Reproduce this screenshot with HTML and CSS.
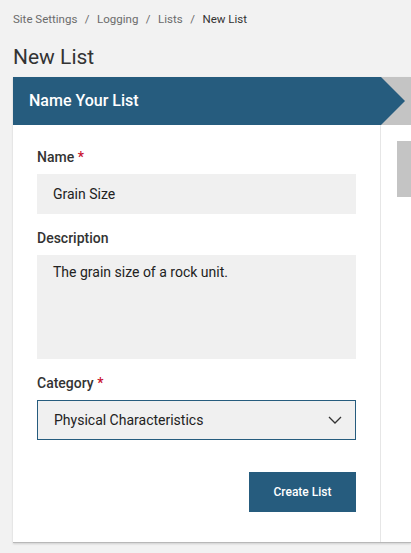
FILE: index.html
```html
<!DOCTYPE html>
<html>
<head>
<meta charset="utf-8">
<link rel="stylesheet" href="styles.css">
</head>
<body>
<nav class="crumbs">
  <span>Site Settings</span><span class="sep">/</span><span>Logging</span><span class="sep">/</span><span>Lists</span><span class="sep">/</span><span class="current">New List</span>
</nav>
<h1 class="title">New List</h1>
<div class="card">
  <div class="steps">
    <div class="step-active">Name Your List</div>
  </div>
  <div class="card-body">
    <div class="main">
      <div class="field">
        <label class="label">Name <span class="req">*</span></label>
        <div class="input">Grain Size</div>
      </div>
      <div class="field">
        <label class="label">Description</label>
        <div class="input textarea">The grain size of a rock unit.</div>
      </div>
      <div class="field">
        <label class="label">Category <span class="req">*</span></label>
        <div class="input select">
          <span>Physical Characteristics</span>
          <svg class="chev" width="14" height="8" viewBox="0 0 14 8"><path d="M1 1l6 6 6-6" fill="none" stroke="#333" stroke-width="1.3"/></svg>
        </div>
      </div>
      <div class="actions">
        <button class="btn">Create List</button>
      </div>
    </div>
    <div class="side">
      <div class="thumb"></div>
    </div>
  </div>
</div>
</body>
</html>
```
FILE: styles.css
```css
html, body { margin: 0; padding: 0; }
body {
  background: #f2f2f2;
  font-family: Roboto, "Liberation Sans", sans-serif;
  color: #333;
  width: 411px;
  height: 553px;
  overflow: hidden;
  padding-left: 13px;
  box-sizing: border-box;
}
.crumbs {
  font-size: 11.5px;
  color: #6b6b6b;
  padding-top: 12px;
  height: 14px;
  line-height: 14px;
}
.crumbs .sep { margin: 0 7.5px; }
.crumbs .current { color: #333; }
.title {
  margin: 0;
  font-size: 21px;
  font-weight: 400;
  color: #333;
  line-height: 24px;
  margin-top: 19px;
  height: 26px;
}
.card {
  margin-top: 6px;
  background: #fff;
  height: 465px;
  border-bottom: 1px solid #b8b8b8;
  box-shadow: 0 1px 2px rgba(0,0,0,0.15);
  display: flex;
  flex-direction: column;
}
.steps {
  height: 48px;
  background: #c4c4c4;
  display: flex;
}
.step-active {
  width: 392px;
  background: #265c7e;
  color: #fff;
  font-size: 16px;
  font-weight: 500;
  line-height: 48px;
  padding-left: 16px;
  box-sizing: border-box;
  clip-path: polygon(0 0, 368px 0, 392px 24px, 368px 48px, 0 48px);
}
.card-body {
  flex: 1;
  display: flex;
}
.main {
  width: 368px;
  border-right: 1px solid #e6e6e6;
  padding: 24px 24px 0 24px;
  box-sizing: border-box;
}
.field { margin-bottom: 16px; }
.label {
  display: block;
  font-size: 14px;
  font-weight: 500;
  color: #333;
  line-height: 16px;
  margin-bottom: 9px;
}
.req { color: #c8102e; }
.input {
  background: #f0f0f0;
  height: 40px;
  font-size: 14px;
  color: #222;
  padding: 0 16px;
  line-height: 40px;
  box-sizing: border-box;
}
.textarea {
  height: 104px;
  line-height: 18px;
  padding-top: 8px;
}
.select {
  border: 1px solid #265c7e;
  display: flex;
  align-items: center;
  justify-content: space-between;
  line-height: normal;
  padding-right: 13px;
}
.actions {
  display: flex;
  justify-content: flex-end;
  padding-top: 16px;
}
.btn {
  background: #265c7e;
  color: #fff;
  border: 0;
  font-family: Roboto, "Liberation Sans", sans-serif;
  font-size: 12px;
  font-weight: 500;
  width: 107px;
  height: 40px;
  padding: 0;
}
.side {
  flex: 1;
  display: flex;
  justify-content: flex-end;
  padding-top: 16px;
}
.thumb {
  width: 14px;
  height: 56px;
  background: #c4c4c4;
}
```
